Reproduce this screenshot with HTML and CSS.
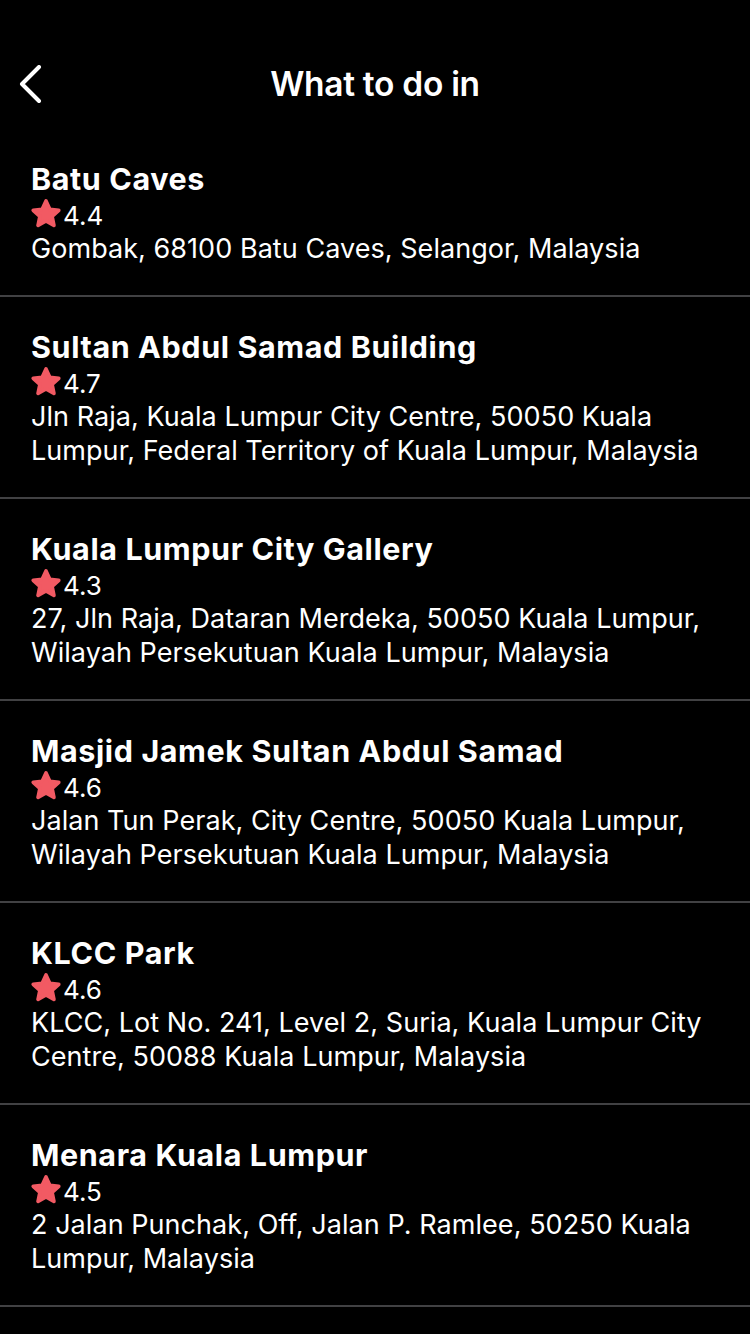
FILE: index.html
```html
<!DOCTYPE html>
<html>
<head>
<meta charset="utf-8">
<link rel="stylesheet" href="styles.css">
</head>
<body>
<div class="screen">
  <header class="nav">
    <button class="back" aria-label="Back">
      <svg width="30" height="40" viewBox="0 0 30 40"><polyline points="20,2 3,19 20,36" fill="none" stroke="#fff" stroke-width="4" stroke-linecap="round" stroke-linejoin="round"/></svg>
    </button>
    <h1 class="nav-title">What to do in</h1>
  </header>
  <ul class="list">
    <li class="item">
      <div class="name">Batu Caves</div>
      <div class="rating"><svg class="star" viewBox="0 0 24 24"><path d="M12 2.8l2.7 5.9 6.3.7-4.7 4.3 1.3 6.3L12 16.8 6.4 20l1.3-6.3L3 9.4l6.3-.7z"/></svg><span>4.4</span></div>
      <div class="addr">Gombak, 68100 Batu Caves, Selangor, Malaysia</div>
    </li>
    <li class="item">
      <div class="name">Sultan Abdul Samad Building</div>
      <div class="rating"><svg class="star" viewBox="0 0 24 24"><path d="M12 2.8l2.7 5.9 6.3.7-4.7 4.3 1.3 6.3L12 16.8 6.4 20l1.3-6.3L3 9.4l6.3-.7z"/></svg><span>4.7</span></div>
      <div class="addr">Jln Raja, Kuala Lumpur City Centre, 50050 Kuala Lumpur, Federal Territory of Kuala Lumpur, Malaysia</div>
    </li>
    <li class="item">
      <div class="name">Kuala Lumpur City Gallery</div>
      <div class="rating"><svg class="star" viewBox="0 0 24 24"><path d="M12 2.8l2.7 5.9 6.3.7-4.7 4.3 1.3 6.3L12 16.8 6.4 20l1.3-6.3L3 9.4l6.3-.7z"/></svg><span>4.3</span></div>
      <div class="addr">27, Jln Raja, Dataran Merdeka, 50050 Kuala Lumpur, Wilayah Persekutuan Kuala Lumpur, Malaysia</div>
    </li>
    <li class="item">
      <div class="name">Masjid Jamek Sultan Abdul Samad</div>
      <div class="rating"><svg class="star" viewBox="0 0 24 24"><path d="M12 2.8l2.7 5.9 6.3.7-4.7 4.3 1.3 6.3L12 16.8 6.4 20l1.3-6.3L3 9.4l6.3-.7z"/></svg><span>4.6</span></div>
      <div class="addr">Jalan Tun Perak, City Centre, 50050 Kuala Lumpur, Wilayah Persekutuan Kuala Lumpur, Malaysia</div>
    </li>
    <li class="item">
      <div class="name">KLCC Park</div>
      <div class="rating"><svg class="star" viewBox="0 0 24 24"><path d="M12 2.8l2.7 5.9 6.3.7-4.7 4.3 1.3 6.3L12 16.8 6.4 20l1.3-6.3L3 9.4l6.3-.7z"/></svg><span>4.6</span></div>
      <div class="addr">KLCC, Lot No. 241, Level 2, Suria, Kuala Lumpur City Centre, 50088 Kuala Lumpur, Malaysia</div>
    </li>
    <li class="item">
      <div class="name">Menara Kuala Lumpur</div>
      <div class="rating"><svg class="star" viewBox="0 0 24 24"><path d="M12 2.8l2.7 5.9 6.3.7-4.7 4.3 1.3 6.3L12 16.8 6.4 20l1.3-6.3L3 9.4l6.3-.7z"/></svg><span>4.5</span></div>
      <div class="addr">2 Jalan Punchak, Off, Jalan P. Ramlee, 50250 Kuala Lumpur, Malaysia</div>
    </li>
  </ul>
</div>
</body>
</html>
```

FILE: styles.css
```css
* { box-sizing: border-box; }
html, body {
  margin: 0;
  padding: 0;
  background: #000;
}
body {
  font-family: Inter, "Liberation Sans", sans-serif;
  color: #fff;
}
.screen {
  width: 750px;
  min-height: 1334px;
  background: #000;
  overflow: hidden;
}
.nav {
  height: 129px;
  display: flex;
  align-items: flex-start;
  justify-content: center;
  padding-top: 64px;
  position: relative;
}
.back {
  position: absolute;
  left: 19px;
  top: 65px;
  width: 30px;
  height: 40px;
  padding: 0;
  border: 0;
  background: transparent;
  display: block;
}
.back svg { display: block; }
.nav-title {
  margin: 0;
  font-size: 33.5px;
  line-height: 40px;
  font-weight: 600;
  letter-spacing: -0.3px;
}
.list {
  list-style: none;
  margin: 0;
  padding: 0;
}
.item {
  padding: 29px 31px 29px;
  border-bottom: 2px solid #414143;
}
.name {
  font-size: 30.5px;
  line-height: 41px;
  font-weight: 700;
  letter-spacing: 0.6px;
}
.rating {
  display: flex;
  align-items: center;
  height: 33px;
  font-size: 26px;
  gap: 0.5px;
}
.star {
  width: 34px;
  height: 34px;
  margin-left: -2.5px;
  margin-top: -3px;
  display: block;
  flex: none;
}
.star path {
  fill: #f25a63;
  stroke: #f25a63;
  stroke-width: 2.6;
  stroke-linejoin: round;
}
.addr {
  font-size: 27px;
  line-height: 34px;
  font-weight: 400;
  letter-spacing: 0.05px;
}
```
